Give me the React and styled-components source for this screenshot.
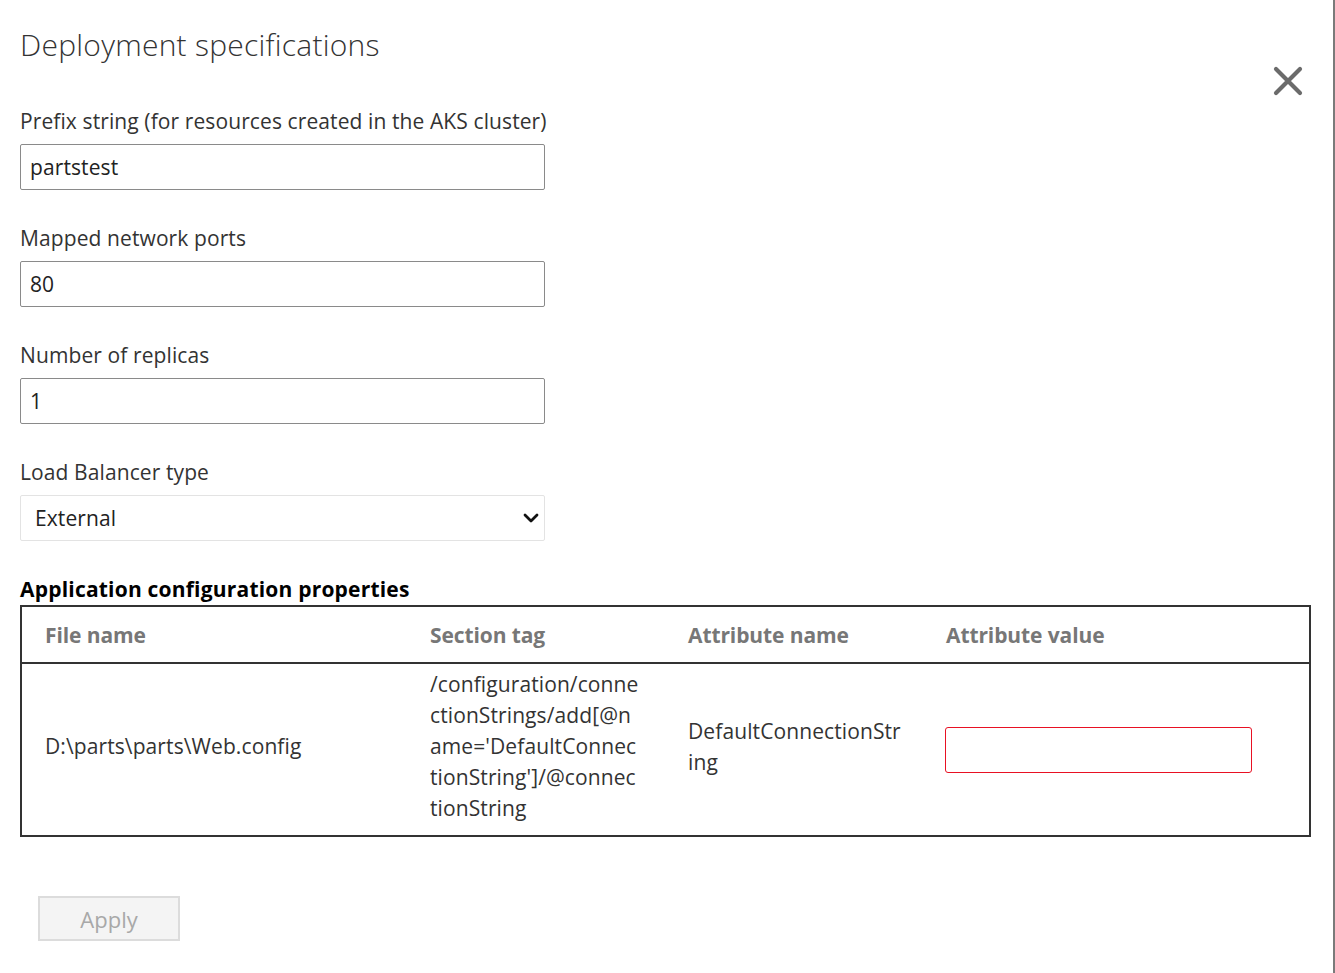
import React, { useState } from "react";
import styled, { createGlobalStyle } from "styled-components";

const GlobalStyle = createGlobalStyle`
  html, body {
    margin: 0;
    padding: 0;
    background: #fff;
  }
  body {
    font-family: "Open Sans", "Noto Sans", "Liberation Sans", sans-serif;
    color: #333;
  }
  * {
    box-sizing: border-box;
  }
`;

const fields = [
  { label: "Prefix string (for resources created in the AKS cluster)", value: "partstest" },
  { label: "Mapped network ports", value: "80" },
  { label: "Number of replicas", value: "1" },
];

const App = () => {
  const [values, setValues] = useState(fields.map((f) => f.value));
  const [lbType, setLbType] = useState("External");
  const [attrValue, setAttrValue] = useState("");

  return (
    <Page>
      <GlobalStyle />
      <Header>
        <Title>Deployment specifications</Title>
        <CloseButton aria-label='Close'>
          <svg width='30' height='30' viewBox='0 0 30 30'>
            <path
              d='M3 3 L27 27 M27 3 L3 27'
              stroke='#6b6b6b'
              strokeWidth='4.2'
              strokeLinecap='round'
            />
          </svg>
        </CloseButton>
      </Header>

      {fields.map((f, i) => (
        <Field key={f.label}>
          <Label>{f.label}</Label>
          <TextInput
            value={values[i]}
            onChange={(e) => {
              const next = [...values];
              next[i] = e.target.value;
              setValues(next);
            }}
          />
        </Field>
      ))}

      <Field>
        <Label>Load Balancer type</Label>
        <SelectWrap>
          <Select value={lbType} onChange={(e) => setLbType(e.target.value)}>
            <option>External</option>
            <option>Internal</option>
          </Select>
          <Chevron width='16' height='10' viewBox='0 0 16 10'>
            <path
              d='M2 2 L8 8 L14 2'
              fill='none'
              stroke='#111'
              strokeWidth='2.8'
              strokeLinecap='round'
              strokeLinejoin='round'
            />
          </Chevron>
        </SelectWrap>
      </Field>

      <SectionTitle>Application configuration properties</SectionTitle>
      <Table>
        <colgroup>
          <col style={{ width: 386 }} />
          <col style={{ width: 258 }} />
          <col style={{ width: 258 }} />
          <col />
        </colgroup>
        <thead>
          <tr>
            <Th>File name</Th>
            <Th>Section tag</Th>
            <Th>Attribute name</Th>
            <Th>Attribute value</Th>
          </tr>
        </thead>
        <tbody>
          <tr>
            <Td $text>D:\parts\parts\Web.config</Td>
            <Td $text $wrap>
              /configuration/connectionStrings/add[@name='DefaultConnectionString']/@connectionString
            </Td>
            <Td $text $wrap $pr={20}>
              DefaultConnectionString
            </Td>
            <Td>
              <ValueInput
                value={attrValue}
                onChange={(e) => setAttrValue(e.target.value)}
              />
            </Td>
          </tr>
        </tbody>
      </Table>

      <Footer>
        <ApplyButton disabled>Apply</ApplyButton>
      </Footer>
    </Page>
  );
};

export default App;

const Page = styled.div`
  width: 1335px;
  height: 973px;
  border-right: 2px solid #7a7a7a;
  padding: 25px 0 0 20px;
  overflow: hidden;
`;

const Header = styled.div`
  display: flex;
  justify-content: space-between;
  align-items: flex-start;
  height: 40px;
  margin-bottom: 42px;
`;

const Title = styled.h1`
  margin: 0;
  font-size: 30px;
  line-height: 40px;
  font-weight: 300;
  color: #333;
  letter-spacing: 0.25px;
`;

const CloseButton = styled.button`
  flex-shrink: 0;
  margin: 41px 30px 0 0;
  padding: 0;
  border: none;
  background: none;
  width: 30px;
  height: 30px;
  cursor: pointer;
  svg {
    display: block;
  }
`;

const Field = styled.div`
  margin-bottom: 34px;
`;

const Label = styled.div`
  font-size: 21px;
  line-height: 28px;
  color: #333;
  margin-bottom: 9px;
  letter-spacing: 0.1px;
`;

const TextInput = styled.input`
  display: block;
  width: 525px;
  height: 46px;
  margin: 0;
  padding: 0 9px;
  border: 1px solid #8a8a8a;
  border-radius: 2px;
  font-family: inherit;
  font-size: 21px;
  letter-spacing: 0.1px;
  color: #222;
  outline: none;
`;

const SelectWrap = styled.div`
  position: relative;
  width: 525px;
`;

const Select = styled.select`
  display: block;
  width: 100%;
  height: 46px;
  margin: 0;
  padding: 0 40px 0 14px;
  border: 1px solid #e3e3e3;
  border-radius: 2px;
  background: #fff;
  appearance: none;
  font-family: inherit;
  font-size: 21px;
  letter-spacing: 0.1px;
  color: #222;
  outline: none;
`;

const Chevron = styled.svg`
  position: absolute;
  right: 6px;
  top: 18px;
  pointer-events: none;
`;

const SectionTitle = styled.div`
  font-size: 21px;
  line-height: 28px;
  font-weight: 700;
  color: #000;
  margin-bottom: 2px;
  letter-spacing: 0.2px;
`;

const Table = styled.table`
  width: 1291px;
  border-collapse: collapse;
  table-layout: fixed;
  border: 2px solid #333;
`;

const Th = styled.th`
  height: 57px;
  padding: 0 20px 0 23px;
  text-align: left;
  font-size: 21px;
  font-weight: 700;
  color: #777;
  letter-spacing: -0.1px;
  border-bottom: 2px solid #333;
`;

const Td = styled.td`
  height: 173px;
  padding: 0 ${(p) => p.$pr ?? 25}px ${(p) => (p.$text ? "6px" : "0")} 23px;
  font-size: 21px;
  line-height: 31px;
  color: #333;
  vertical-align: middle;
  word-break: ${(p) => (p.$wrap ? "break-all" : "normal")};
  letter-spacing: 0.1px;
`;

const ValueInput = styled.input`
  display: block;
  width: 307px;
  height: 46px;
  margin: 0 0 0 -1px;
  padding: 0 9px;
  border: 1px solid #e81123;
  border-radius: 3px;
  font-family: inherit;
  font-size: 21px;
  outline: none;
`;

const Footer = styled.div`
  padding: 59px 0 0 18px;
`;

const ApplyButton = styled.button`
  width: 142px;
  height: 45px;
  border: 2px solid #dcdcdc;
  background: #f4f4f4;
  color: #a8a8a8;
  font-family: inherit;
  font-size: 22px;
  cursor: default;
`;
